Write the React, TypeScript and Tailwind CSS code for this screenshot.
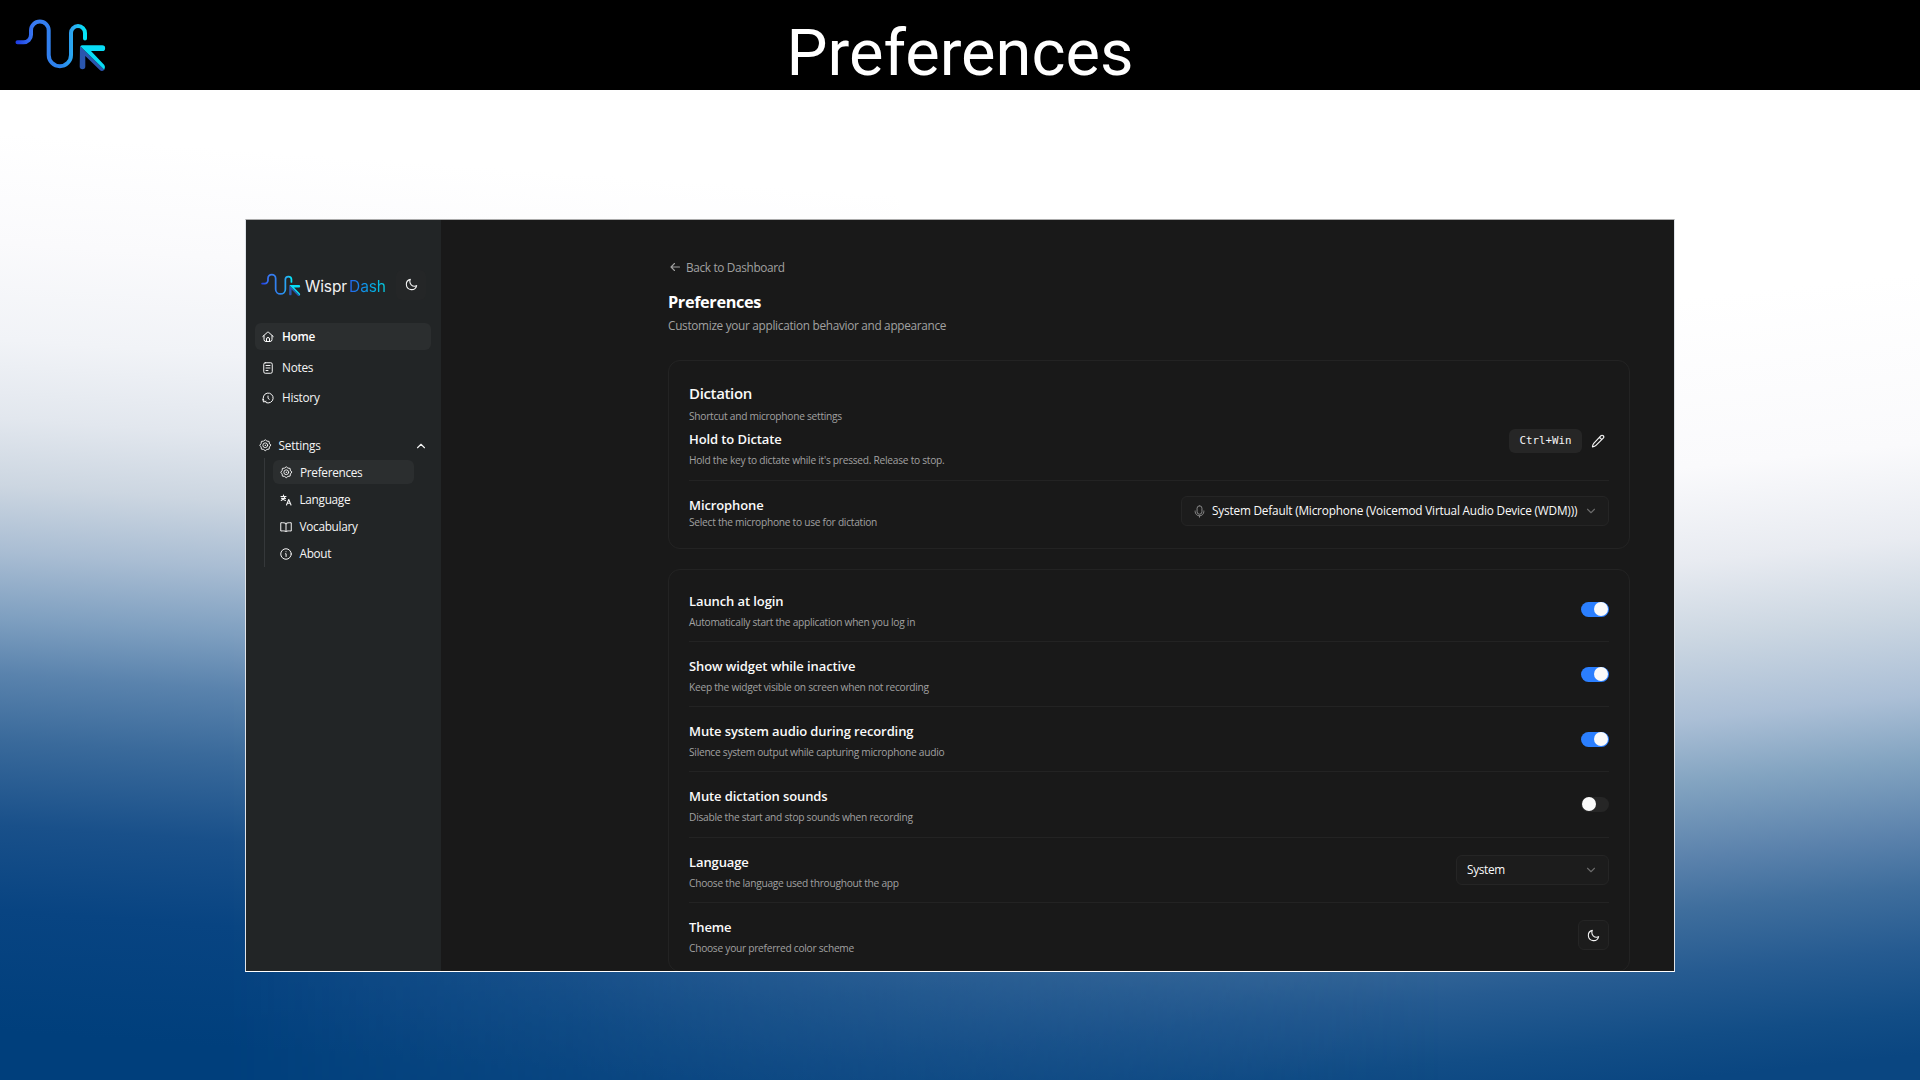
import type { ReactNode } from "react"
import { clsx } from "clsx"

type IconProps = { className?: string; strokeWidth?: number; children?: ReactNode }

function Icon({ className, strokeWidth = 2, children }: IconProps) {
  return (
    <svg
      viewBox="0 0 24 24"
      fill="none"
      stroke="currentColor"
      strokeWidth={strokeWidth}
      strokeLinecap="round"
      strokeLinejoin="round"
      className={clsx("shrink-0", className)}
    >
      {children}
    </svg>
  )
}

const HomeIcon = () => (
  <Icon className="size-3">
    <path d="M1.5 11 10.6 2.8a2 2 0 0 1 2.8 0L22.5 11" />
    <path d="M4 9.5V17a4 4 0 0 0 4 4h8a4 4 0 0 0 4-4V9.5" />
    <path d="M9 21v-5a3 3 0 0 1 6 0v5" />
  </Icon>
)

const NotesIcon = () => (
  <Icon className="size-3">
    <rect x="3.5" y="1.5" width="17" height="21" rx="3" />
    <path d="M8 7h8M8 12h8M8 17h4" />
  </Icon>
)

const HistoryIcon = () => (
  <Icon className="size-3">
    <path d="M3.5 17A10 10 0 1 1 8 21.2" />
    <path d="M1.5 14.5 3 20l5-1.5" />
    <path d="M12 8v4.5l2.5 2" />
  </Icon>
)

const GearIcon = () => (
  <Icon className="size-[12.5px]" strokeWidth={1.8}>
    <path d="M22.5 12 19.95 15.29 19.4 19.4 15.29 19.95 12 22.5 8.71 19.95 4.6 19.4 4.05 15.29 1.5 12 4.05 8.71 4.6 4.6 8.71 4.05 12 1.5 15.29 4.05 19.4 4.6 19.95 8.71Z" />
    <circle cx="12" cy="12" r="4.6" />
    <circle cx="12" cy="12" r="0.3" />
  </Icon>
)

const TranslateIcon = () => (
  <Icon className="size-3" strokeWidth={2.2}>
    <path d="M2 5h10M7 2v3M10 5c-1 4-4 6.5-7.5 8M4 8c1.5 3 4 4.5 7 5M3 9h8" />
    <path d="m13 22 4.5-11L22 22M14.5 18.5h6" />
  </Icon>
)

const BookIcon = () => (
  <Icon className="size-3">
    <path d="M12 5C10 3.5 6 3.2 1.5 3.5V20c4-.4 8.5-.3 10.5 1 2-1.3 6.5-1.4 10.5-1V3.5C18 3.2 14 3.5 12 5ZM12 5v16" />
  </Icon>
)

const InfoIcon = () => (
  <Icon className="size-3">
    <circle cx="12" cy="12" r="10.5" />
    <path d="M11 11.5h1.2V17M12 7.5v.1" />
  </Icon>
)

const MoonIcon = () => (
  <Icon className="size-[13px]">
    <path d="M21.5 14.08c-1.2.64-2.57 1-4.02 1A8.56 8.56 0 0 1 8.92 6.52c0-1.45.36-2.82 1-4.02A9.63 9.63 0 1 0 21.5 14.08Z" />
  </Icon>
)

const PencilIcon = () => (
  <Icon className="size-[14px]">
    <path d="M15.5 4.5 17 3a2.8 2.8 0 0 1 4 4L8.5 19.5c-1.5 1.5-3.5 2-6 2.5.2-2.5.8-4.5 2.2-6L15.5 4.5ZM14.5 5.5l4 4" />
  </Icon>
)

const MicIcon = () => (
  <Icon className="size-[13px]" strokeWidth={1.8}>
    <rect x="7.5" y="1.5" width="9" height="15.5" rx="4.5" />
    <path d="M20 11v1a8 8 0 0 1-16 0v-1M12 20v2.5" />
  </Icon>
)

const ChevronIcon = ({ up }: { up?: boolean }) => (
  <Icon className="size-3" strokeWidth={2.2}>
    <path d={up ? "m5 15.5 7-7 7 7" : "m5 8.5 7 7 7-7"} />
  </Icon>
)

function Logo({ id, className }: { id: string; className?: string }) {
  return (
    <svg viewBox="15 18 92 55" fill="none" className={clsx("shrink-0", className)}>
      <defs>
        <linearGradient id={id} gradientUnits="userSpaceOnUse" x1="17" y1="0" x2="85" y2="0">
          <stop offset="0" stopColor="#1f3fe6" />
          <stop offset="0.25" stopColor="#3a7bf2" />
          <stop offset="0.65" stopColor="#2a84ec" />
          <stop offset="0.85" stopColor="#2aaff2" />
          <stop offset="1" stopColor="#04e6f8" />
        </linearGradient>
      </defs>
      <path
        d="M17.5 42.3H23.5A7.5 7.5 0 0 0 31 34.8V30.3A8.85 8.85 0 0 1 48.7 30.3V55A11.15 11.15 0 0 0 71 55V33A7 7 0 0 1 85 33V38.5"
        stroke={`url(#${id})`}
        strokeWidth="4"
        strokeLinecap="round"
      />
      <path d="M80 46 104.3 69.7Q102 72 99.8 70L85.3 56V66.5A2.8 2.8 0 0 1 79.7 66.5Z" fill="#2a56ae" />
      <path d="M80.3 46.2Q81 45.3 82.5 45.3H102.3A2.8 2.8 0 0 1 102.3 51H91L104.3 65Q106 67.5 104.3 69.7Z" fill="#08dcf6" />
    </svg>
  )
}

function NavItem({ icon, label, active }: { icon: ReactNode; label: string; active?: boolean }) {
  return (
    <div
      className={clsx(
        "flex h-[27px] items-center gap-2 rounded-md pl-[7px] pt-px text-[11.8px] tracking-[-0.25px]",
        active ? "bg-[#2b2e2f] font-semibold text-white" : "text-[#f5f5f5]",
      )}
    >
      {icon}
      <span>{label}</span>
    </div>
  )
}

function SubItem({ icon, label, active }: { icon: ReactNode; label: string; active?: boolean }) {
  return (
    <div
      className={clsx(
        "flex h-6 items-center gap-[7.5px] rounded-md pl-[7px] pt-px text-[11.8px] tracking-[-0.3px] text-[#f5f5f5]",
        active && "bg-[#2b2e2f]",
      )}
    >
      {icon}
      <span>{label}</span>
    </div>
  )
}

function Switch({ on }: { on?: boolean }) {
  return (
    <div
      className={clsx(
        "flex h-[15px] w-7 items-center rounded-full px-px",
        on ? "justify-end bg-[#2b7fff]" : "justify-start bg-[#262626]",
      )}
    >
      <div className="size-[14px] rounded-full bg-[#fafafa]" />
    </div>
  )
}

const titleClass = "text-[13px] leading-5 font-semibold tracking-[-0.1px] text-[#fafafa]"
const hintClass = "text-[10.2px] leading-[14px] tracking-[-0.265px] text-[#a1a1a1]"

function SettingRow({ title, hint, last, children }: { title: string; hint: string; last?: boolean; children: ReactNode }) {
  return (
    <div className={clsx("flex h-[65.15px] items-center justify-between", !last && "border-b border-[#232323]")}>
      <div className="pt-0.5">
        <div className={titleClass}>{title}</div>
        <div className={clsx(hintClass, "mt-1")}>{hint}</div>
      </div>
      {children}
    </div>
  )
}

const toggles = [
  { title: "Launch at login", hint: "Automatically start the application when you log in", on: true },
  { title: "Show widget while inactive", hint: "Keep the widget visible on screen when not recording", on: true },
  { title: "Mute system audio during recording", hint: "Silence system output while capturing microphone audio", on: true },
  { title: "Mute dictation sounds", hint: "Disable the start and stop sounds when recording", on: false },
]

function Sidebar() {
  return (
    <aside className="w-[195px] shrink-0 bg-[#222526] pl-[9px] pr-[10px] pt-[49px]">
      <div className="flex h-[31px] items-center pl-1.5">
        <Logo id="logo-small" className="h-6 w-10" />
        <span className="ml-1 flex gap-0.5 pt-1 font-['Inter'] text-[15.5px] leading-5 tracking-[-0.1px]">
          <span className="text-[#f1f1f1]">Wispr</span>
          <span className="bg-linear-to-r from-[#2563eb] to-[#08cddd] bg-clip-text text-transparent">Dash</span>
        </span>
        <div className="ml-auto mr-[5px] flex size-[30px] items-center justify-center rounded-md bg-[#242627] text-[#f5f5f5]">
          <MoonIcon />
        </div>
      </div>

      <nav className="mt-[23px] flex flex-col gap-[3.5px]">
        <NavItem icon={<HomeIcon />} label="Home" active />
        <NavItem icon={<NotesIcon />} label="Notes" />
        <NavItem icon={<HistoryIcon />} label="History" />
      </nav>

      <div className="mt-5 flex h-[27px] items-center gap-[7px] pl-1 pr-1 pt-0.5 text-[11.8px] tracking-[-0.2px] text-[#f5f5f5]">
        <GearIcon />
        <span>Settings</span>
        <span className="ml-auto">
          <ChevronIcon up />
        </span>
      </div>
      <div className="ml-[9px] flex h-[109px] w-[150px] flex-col gap-[3px] border-l border-[#35383a] pl-2 pt-0.5">
        <SubItem icon={<GearIcon />} label="Preferences" active />
        <SubItem icon={<TranslateIcon />} label="Language" />
        <SubItem icon={<BookIcon />} label="Vocabulary" />
        <SubItem icon={<InfoIcon />} label="About" />
      </div>
    </aside>
  )
}

function Preferences() {
  return (
    <main className="flex-1 bg-[#191919] pl-[227px] pr-[44px] pt-[39px]">
      <div className="flex items-center gap-[5px] pl-px text-[11.8px] leading-4 tracking-[-0.33px] text-[#a1a1a1]">
        <Icon className="size-3" strokeWidth={2.2}>
          <path d="M4 12h17M11 5l-7 7 7 7" />
        </Icon>
        <span>Back to Dashboard</span>
      </div>
      <h1 className="mt-[14.5px] text-[16.3px] leading-6 font-bold tracking-[-0.36px] text-white">Preferences</h1>
      <p className="mt-[3px] text-[11.8px] leading-4 tracking-[-0.3px] text-[#a1a1a1]">
        Customize your application behavior and appearance
      </p>

      <section className="mt-[27.5px] h-[189px] rounded-xl border border-[#232323] px-5 pt-[22px]">
        <h2 className="text-[15px] leading-5 font-semibold tracking-[-0.35px] text-[#fafafa]">Dictation</h2>
        <p className={clsx(hintClass, "mt-1.5")}>Shortcut and microphone settings</p>
        <div className="mt-1.5 flex h-[52px] items-start justify-between border-b border-[#232323]">
          <div>
            <div className={titleClass}>Hold to Dictate</div>
            <div className={clsx(hintClass, "mt-1")}>Hold the key to dictate while it's pressed. Release to stop.</div>
          </div>
          <div className="flex items-center gap-[9px] pr-1 text-[#f5f5f5]">
            <kbd className="flex h-6 w-[73px] items-center justify-center rounded-md bg-[#262626] pt-px font-['DejaVu_Sans_Mono'] text-[10.8px] font-medium">
              Ctrl+Win
            </kbd>
            <PencilIcon />
          </div>
        </div>
        <div className="flex h-[60px] items-center justify-between">
          <div className="pt-px">
            <div className={titleClass}>Microphone</div>
            <div className={hintClass}>Select the microphone to use for dictation</div>
          </div>
          <div className="flex h-[30px] w-[428px] items-center rounded-md border border-[#252525] bg-[#1c1c1c] px-[11px] text-[11.8px] tracking-[-0.19px] text-[#fafafa]">
            <span className="text-[#8a8a8a]">
              <MicIcon />
            </span>
            <span className="ml-1.5 whitespace-nowrap">System Default (Microphone (Voicemod Virtual Audio Device (WDM)))</span>
            <span className="ml-auto text-[#6b6b6b]">
              <ChevronIcon />
            </span>
          </div>
        </div>
      </section>

      <section className="mt-5 h-[403px] rounded-xl border border-[#232323] px-5 pt-[7px]">
        {toggles.map((t) => (
          <SettingRow key={t.title} title={t.title} hint={t.hint}>
            <Switch on={t.on} />
          </SettingRow>
        ))}
        <SettingRow title="Language" hint="Choose the language used throughout the app">
          <div className="flex h-[30px] w-[153px] items-center justify-between rounded-md border border-[#252525] bg-[#1c1c1c] pl-2.5 pr-[11px] text-[11.8px] tracking-[-0.3px] text-[#fafafa]">
            <span>System</span>
            <span className="text-[#6b6b6b]">
              <ChevronIcon />
            </span>
          </div>
        </SettingRow>
        <SettingRow title="Theme" hint="Choose your preferred color scheme" last>
          <div className="flex h-[30px] w-[31px] items-center justify-center rounded-md border border-[#252525] bg-[#1c1c1c] text-[#f5f5f5]">
            <MoonIcon />
          </div>
        </SettingRow>
      </section>
    </main>
  )
}

export default function App() {
  return (
    <div className="relative flex h-[1080px] w-[1920px] flex-col overflow-hidden bg-[linear-gradient(174deg,#ffffff_0%,#ffffff_37%,#fafafc_50.3%,#e8ebf1_57.7%,#ccd7e2_63.6%,#abbfd6_70%,#83a4c1_74.9%,#5b82ac_80.8%,#3f6e9d_84.8%,#265b91_89.7%,#124d86_94.7%,#0a4681_98%)]">
      {/* deeper blue towards the left edge */}
      <div className="absolute inset-0 bg-[linear-gradient(184deg,#ffffff_0%,#ffffff_22%,#fafafc_31%,#f1f3f7_39%,#e2e7ee_45.5%,#ccd6e1_51%,#a9bdd3_56.5%,#7e9fc0_62%,#5a83ad_66.5%,#3a6a9b_72%,#19508a_79%,#084482_86%,#003f7c_96%)] [mask-image:linear-gradient(90deg,#000_0%,#000_12%,rgba(0,0,0,0.8)_30%,transparent_75%)]" />

      <header className="relative flex h-[90px] shrink-0 items-center bg-black">
        <Logo id="logo-large" className="ml-[15px] h-[55px] w-[92px]" />
        <h1 className="-ml-[107px] w-full pt-4 text-center font-['Roboto'] text-[65px] leading-none text-white">Preferences</h1>
      </header>

      <div className="relative ml-[245px] mt-[129px] flex h-[753px] w-[1430px] overflow-hidden border border-white border-t-[#ababab] border-x-[#dfe3e8] font-['Open_Sans',sans-serif]">
        <Sidebar />
        <Preferences />
      </div>
    </div>
  )
}
